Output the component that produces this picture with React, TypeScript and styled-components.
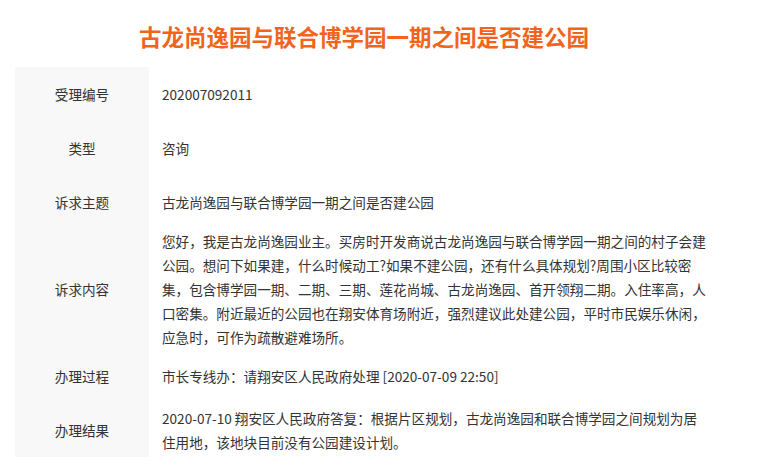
import React from "react";
import styled, { createGlobalStyle } from "styled-components";

const GlobalStyle = createGlobalStyle`
  html, body {
    margin: 0;
    padding: 0;
    background: #ffffff;
    overflow: hidden;
  }
  body {
    font-family: "Noto Sans CJK SC", "Noto Sans", sans-serif;
  }
`;

const Page = styled.div`
  width: 698px;
  margin-left: 15px;
`;

const Title = styled.h1`
  margin: 0;
  padding-top: 21px;
  height: 46px;
  line-height: 30px;
  font-size: 22.5px;
  font-weight: 700;
  color: #f2631b;
  text-align: center;
  letter-spacing: 0;
`;

const Table = styled.div`
  display: flex;
  flex-direction: column;
`;

const Row = styled.div<{ $h?: number }>`
  display: grid;
  grid-template-columns: 134px 1fr;
  min-height: ${(p) => p.$h ?? 54}px;
`;

const Label = styled.div`
  background: #f8f8f8;
  display: flex;
  align-items: center;
  justify-content: center;
  font-size: 13.6px;
  color: #333333;
`;

const Value = styled.div`
  display: flex;
  align-items: center;
  padding-left: 13px;
  font-size: 13.6px;
  line-height: 24px;
  color: #333333;
`;

const Text = styled.div`
  white-space: nowrap;
`;

const rows: { label: string; lines: string[]; h?: number }[] = [
  { label: "受理编号", lines: ["202007092011"] },
  { label: "类型", lines: ["咨询"] },
  { label: "诉求主题", lines: ["古龙尚逸园与联合博学园一期之间是否建公园"] },
  {
    label: "诉求内容",
    h: 120,
    lines: [
      "您好，我是古龙尚逸园业主。买房时开发商说古龙尚逸园与联合博学园一期之间的村子会建",
      "公园。想问下如果建，什么时候动工?如果不建公园，还有什么具体规划?周围小区比较密",
      "集，包含博学园一期、二期、三期、莲花尚城、古龙尚逸园、首开领翔二期。入住率高，人",
      "口密集。附近最近的公园也在翔安体育场附近，强烈建议此处建公园，平时市民娱乐休闲，",
      "应急时，可作为疏散避难场所。",
    ],
  },
  { label: "办理过程", lines: ["市长专线办：请翔安区人民政府处理 [2020-07-09 22:50]"] },
  {
    label: "办理结果",
    lines: [
      "2020-07-10 翔安区人民政府答复：根据片区规划，古龙尚逸园和联合博学园之间规划为居",
      "住用地，该地块目前没有公园建设计划。",
    ],
  },
];

export default function App() {
  return (
    <>
      <GlobalStyle />
      <Page>
        <Title>古龙尚逸园与联合博学园一期之间是否建公园</Title>
        <Table>
          {rows.map((r) => (
            <Row key={r.label} $h={r.h}>
              <Label>{r.label}</Label>
              <Value>
                <Text>
                  {r.lines.map((l, i) => (
                    <div key={i}>{l}</div>
                  ))}
                </Text>
              </Value>
            </Row>
          ))}
        </Table>
      </Page>
    </>
  );
}
